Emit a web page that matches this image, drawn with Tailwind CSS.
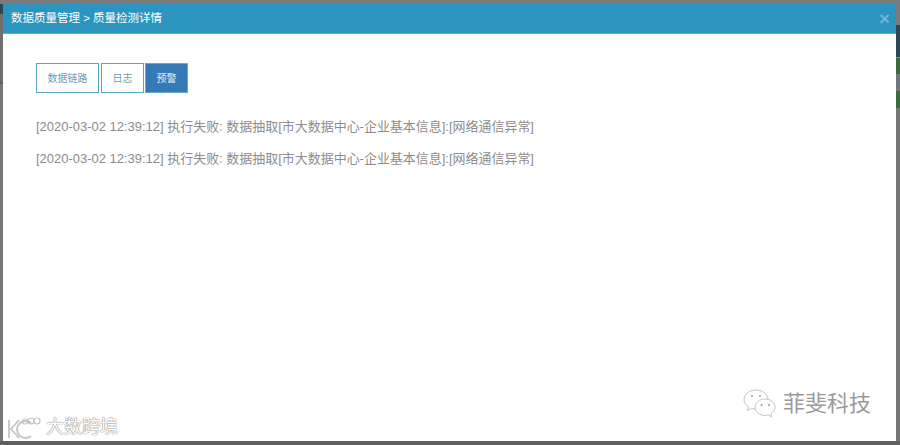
<!DOCTYPE html>
<html lang="en">
<head>
    <meta charset="UTF-8">
    <title>质量检测详情</title>
    <script src="https://cdn.jsdelivr.net/npm/@tailwindcss/browser@4"></script>
</head>
<body class="bg-[#777777] overflow-hidden font-['Liberation_Sans','Noto_Sans_CJK_SC',sans-serif]">
    <div class="w-[900px] h-[445px] flex flex-col">
      <div class="h-1 shrink-0 bg-[#7b7b7b]"></div>
      <div class="flex h-[437px]">
        <!-- page behind the modal, left edge -->
        <div class="w-[3px] shrink-0 flex flex-col bg-[#777777]">
          <div class="h-[10px] bg-[#2c4653]"></div>
          <div class="h-[68px] bg-[#6f6f6f]"></div>
          <div class="h-[2px] bg-[#565f66]"></div>
        </div>
        <div class="relative w-[893px] bg-white flex flex-col">
          <div class="h-[30px] shrink-0 bg-[#2b94bf] flex items-center justify-between pl-2 pr-[6px] border-b border-[#5aaed0]">
            <span class="text-white text-[11.5px]">数据质量管理 &gt; 质量检测详情</span>
            <span class="text-[#6fb6d6] text-[19px] font-bold leading-none">×</span>
          </div>
          <div class="pt-[29px] pl-[33px]">
            <div class="flex">
              <button class="w-[63px] h-[30px] border border-[#5aa5c6] text-[#6f9cb3] text-[10px]">数据链路</button>
              <button class="ml-[2px] w-[43px] h-[30px] border border-[#5aa5c6] text-[#6f9cb3] text-[10px]">日志</button>
              <button class="ml-[1px] w-[43px] h-[30px] border border-[#6aa8c8] bg-[#337ab7] text-[#e8f0f6] text-[10px]">预警</button>
            </div>
            <p class="mt-[25px] text-[#8c8c8c] text-[12.98px] leading-[18px]">[2020-03-02 12:39:12] 执行失败: 数据抽取[市大数据中心-企业基本信息]:[网络通信异常]</p>
            <p class="mt-[14px] text-[#8c8c8c] text-[12.98px] leading-[18px]">[2020-03-02 12:39:12] 执行失败: 数据抽取[市大数据中心-企业基本信息]:[网络通信异常]</p>
          </div>
          <!-- watermarks over the content -->
          <div class="absolute left-[4px] bottom-[2px] flex items-center gap-[5px]">
            <svg width="34" height="24" viewBox="0 0 34 24" fill="none" stroke="#c4c4c4" stroke-width="1.800">
              <path d="M2 5v18M12 5l-8 9 8 9"/>
              <path d="M24 8a8.500 8.500 0 1 0 0 13"/>
              <circle cx="18" cy="6.500" r="2.500" stroke-width="1.200"/><circle cx="24" cy="6" r="3" stroke-width="1.200"/><circle cx="30" cy="6" r="3" stroke-width="1.200"/>
            </svg>
            <span class="text-white text-[18px] leading-none [text-shadow:0_0_1px_#777,0_0_1px_#777]">大数跨境</span>
          </div>
          <div class="absolute right-[25px] bottom-[22px] flex items-center gap-[6px]">
            <svg width="34" height="30" viewBox="0 0 34 30" fill="#fff" stroke="#bdbdbd" stroke-width="0.9">
              <path d="M13 1C6.500 1 1 5.200 1 10.500c0 3 1.700 5.500 4.500 7.300L4.500 21.500l4.200-2.200c1.400.4 2.800.6 4.300.6 6.500 0 12-4.200 12-9.400S19.500 1 13 1z"/>
              <path d="M22 10c-5.500 0-10 3.700-10 8.200s4.500 8.200 10 8.200c1.100 0 2.200-.2 3.300-.5l3.400 2-.9-3.100c2.500-1.500 4.200-3.900 4.200-6.600 0-4.500-4.500-8.200-10-8.200z"/>
              <circle cx="9" cy="7" r="1" fill="#999" stroke="none"/><circle cx="17" cy="7" r="1" fill="#999" stroke="none"/>
              <circle cx="18.500" cy="16" r="1" fill="#999" stroke="none"/><circle cx="26" cy="16" r="1" fill="#999" stroke="none"/>
            </svg>
            <span class="text-[#9a9a9a] text-[22px] leading-none">菲斐科技</span>
          </div>
        </div>
        <!-- page behind the modal, right edge -->
        <div class="w-1 shrink-0 flex flex-col bg-[#777777]">
          <div class="h-[21px] bg-[#7b7b7b]"></div>
          <div class="h-[32px] bg-[#2c4653]"></div>
          <div class="h-[1px] bg-[#8a8a8a]"></div>
          <div class="h-[16px] bg-[#3f6a3f]"></div>
          <div class="h-[14px] bg-[#6f7680]"></div>
          <div class="h-[3px] bg-[#777777]"></div>
          <div class="h-[17px] bg-[#3f6a3f]"></div>
        </div>
      </div>
      <div class="h-1 shrink-0 bg-[#5f5f5f]"></div>
    </div>
</body>
</html>
